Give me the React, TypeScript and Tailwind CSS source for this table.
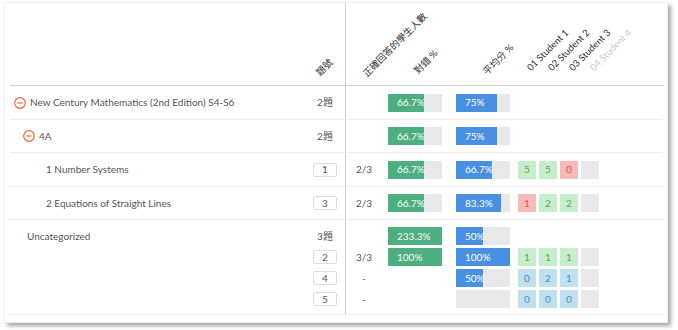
import React from "react";

type Tone = "green" | "red" | "blue" | "empty";
type Mark = { v: string; tone: Tone };

const toneClass: Record<Tone, string> = {
  green: "bg-[#c6eecb] text-[#5ba35f]",
  red: "bg-[#f8b9b9] text-[#e0534f]",
  blue: "bg-[#bfe0ed] text-[#4a8cc6]",
  empty: "bg-[#e9e9e9]",
};

function MinusIcon() {
  return (
    <svg width="12" height="12" viewBox="0 0 12 12" className="shrink-0">
      <circle cx="6" cy="6" r="5.3" fill="none" stroke="#f0683a" strokeWidth="1.2" />
      <line x1="3.3" y1="6" x2="8.7" y2="6" stroke="#f0683a" strokeWidth="1.2" />
    </svg>
  );
}

function Diag({ children, light }: { children: React.ReactNode; light?: boolean }) {
  return (
    <span
      className={`inline-block origin-bottom-left -rotate-45 whitespace-nowrap text-[9.5px] leading-none ${
        light ? "text-[#cccccc]" : "text-[#333333]"
      }`}
    >
      {children}
    </span>
  );
}

function Bar({ pct, label, color }: { pct: number; label?: string; color: string }) {
  return (
    <div className="relative h-[18px] w-[54px] bg-[#e8e8e8]">
      <div className={`h-full ${color}`} style={{ width: `${Math.min(pct, 100)}%` }} />
      {label && (
        <span className="absolute left-[9px] top-0 flex h-full items-center text-[10px] text-white">
          {label}
        </span>
      )}
    </div>
  );
}

function QBox({ n }: { n: string }) {
  return (
    <div className="flex h-[14px] w-[24px] items-center justify-center rounded-[2px] border border-[#dddddd] bg-white text-[10px] text-[#555555]">
      {n}
    </div>
  );
}

function Marks({ marks }: { marks: Mark[] }) {
  return (
    <div className="flex gap-[3px]">
      {marks.map((m, i) => (
        <div
          key={i}
          className={`flex h-[18px] w-[18px] items-center justify-center text-[10px] ${toneClass[m.tone]}`}
        >
          {m.v}
        </div>
      ))}
    </div>
  );
}

const green = "bg-[#4dae80]";
const blue = "bg-[#4a90e2]";

type RowProps = {
  h: string;
  name: React.ReactNode;
  qnum: React.ReactNode;
  count?: string;
  correct: number;
  avg: number;
  marks?: Mark[];
};

function Row({ h, name, qnum, count, correct, avg, marks }: RowProps) {
  return (
    <div className={`flex ${h} border-b border-[#eeeeee]`}>
      <div className="flex w-[295px] items-center text-[10px] text-[#555555]">{name}</div>
      <div className="flex w-[41px] items-center justify-center border-r border-[#cfcfcf] text-[10px] text-[#555555]">
        {qnum}
      </div>
      <div className="flex w-[42px] items-center pl-[11px]">
        <div className="flex w-[14px] justify-center text-[10px] text-[#555555]">{count}</div>
      </div>
      <div className="flex w-[68px] items-center">
        <Bar pct={correct} label={`${correct}%`} color={green} />
      </div>
      <div className="flex w-[62px] items-center">
        <Bar pct={avg} label={`${avg}%`} color={blue} />
      </div>
      <div className="flex items-center">{marks && <Marks marks={marks} />}</div>
    </div>
  );
}

const emptyMark: Mark = { v: "", tone: "empty" };

export default function App() {
  const students = ["01 Student 1", "02 Student 2", "03 Student 3", "04 Student 4"];

  return (
    <div className="h-[330px] w-[678px] bg-white font-['Lato','Noto_Sans_CJK_TC',sans-serif]">
      <div className="ml-[4px] mt-[2px] w-[664px] border border-[#f0f0f0] bg-white pb-[7px] pl-[5px] pr-[4px] shadow-[3px_3px_4px_rgba(0,0,0,0.35)]">
        {/* header */}
        <div className="flex h-[83px] border-b border-[#cdd0d6]">
          <div className="w-[295px]" />
          <div className="flex w-[41px] items-end border-r border-[#cfcfcf] pb-[8px] pl-[16px]">
            <Diag>題號</Diag>
          </div>
          <div className="flex w-[42px] items-end pb-[7px] pl-[22px]">
            <Diag>正確回答的學生人數</Diag>
          </div>
          <div className="flex w-[68px] items-end pb-[10px] pl-[31px]">
            <Diag>對錯 %</Diag>
          </div>
          <div className="flex w-[62px] items-end pb-[9px] pl-[32px]">
            <Diag>平均分 %</Diag>
          </div>
          <div className="flex items-end gap-[3px] pb-[8px]">
            {students.map((s, i) => (
              <div key={s} className="w-[18px] pl-[14px]">
                <Diag light={i === 3}>{s}</Diag>
              </div>
            ))}
          </div>
        </div>

        <Row
          h="h-[34px]"
          name={
            <div className="flex items-center gap-[4px] pl-[4px]">
              <MinusIcon />
              <span>New Century Mathematics (2nd Edition) S4-S6</span>
            </div>
          }
          qnum="2題"
          correct={66.7}
          avg={75}
        />
        <Row
          h="h-[33px]"
          name={
            <div className="flex items-center gap-[4px] pl-[13px]">
              <MinusIcon />
              <span>4A</span>
            </div>
          }
          qnum="2題"
          correct={66.7}
          avg={75}
        />
        <Row
          h="h-[34px]"
          name={<span className="pl-[36px]">1 Number Systems</span>}
          qnum={<QBox n="1" />}
          count="2/3"
          correct={66.7}
          avg={66.7}
          marks={[
            { v: "5", tone: "green" },
            { v: "5", tone: "green" },
            { v: "0", tone: "red" },
            emptyMark,
          ]}
        />
        <Row
          h="h-[33px]"
          name={<span className="pl-[36px]">2 Equations of Straight Lines</span>}
          qnum={<QBox n="3" />}
          count="2/3"
          correct={66.7}
          avg={83.3}
          marks={[
            { v: "1", tone: "red" },
            { v: "2", tone: "green" },
            { v: "2", tone: "green" },
            emptyMark,
          ]}
        />

        {/* uncategorized block */}
        <div className="flex border-b border-[#eeeeee]">
          <div className="flex w-[295px] flex-col gap-[3px] pb-[6px] pt-[7px] text-[10px] text-[#555555]">
            <div className="flex h-[18px] items-center pl-[17px]">Uncategorized</div>
          </div>
          <div className="flex w-[41px] flex-col items-center gap-[3px] border-r border-[#cfcfcf] pb-[6px] pt-[7px] text-[10px] text-[#555555]">
            <div className="flex h-[18px] items-center">3題</div>
            <div className="flex h-[18px] items-center">
              <QBox n="2" />
            </div>
            <div className="flex h-[18px] items-center">
              <QBox n="4" />
            </div>
            <div className="flex h-[18px] items-center">
              <QBox n="5" />
            </div>
          </div>
          <div className="flex w-[42px] flex-col gap-[3px] pb-[6px] pl-[11px] pt-[7px] text-[10px] text-[#555555]">
            <div className="h-[18px]" />
            {["3/3", "-", "-"].map((c, i) => (
              <div key={i} className="flex h-[18px] w-[14px] items-center justify-center">
                {c}
              </div>
            ))}
          </div>
          <div className="flex w-[68px] flex-col gap-[3px] pb-[6px] pt-[7px]">
            <Bar pct={233.3} label="233.3%" color={green} />
            <Bar pct={100} label="100%" color={green} />
          </div>
          <div className="flex w-[62px] flex-col gap-[3px] pb-[6px] pt-[7px]">
            <Bar pct={50} label="50%" color={blue} />
            <Bar pct={100} label="100%" color={blue} />
            <Bar pct={50} label="50%" color={blue} />
            <Bar pct={0} color={blue} />
          </div>
          <div className="flex flex-col gap-[3px] pb-[6px] pt-[7px]">
            <div className="h-[18px]" />
            <Marks
              marks={[
                { v: "1", tone: "green" },
                { v: "1", tone: "green" },
                { v: "1", tone: "green" },
                emptyMark,
              ]}
            />
            <Marks
              marks={[
                { v: "0", tone: "blue" },
                { v: "2", tone: "blue" },
                { v: "1", tone: "blue" },
                emptyMark,
              ]}
            />
            <Marks
              marks={[
                { v: "0", tone: "blue" },
                { v: "0", tone: "blue" },
                { v: "0", tone: "blue" },
                emptyMark,
              ]}
            />
          </div>
        </div>
      </div>
    </div>
  );
}
